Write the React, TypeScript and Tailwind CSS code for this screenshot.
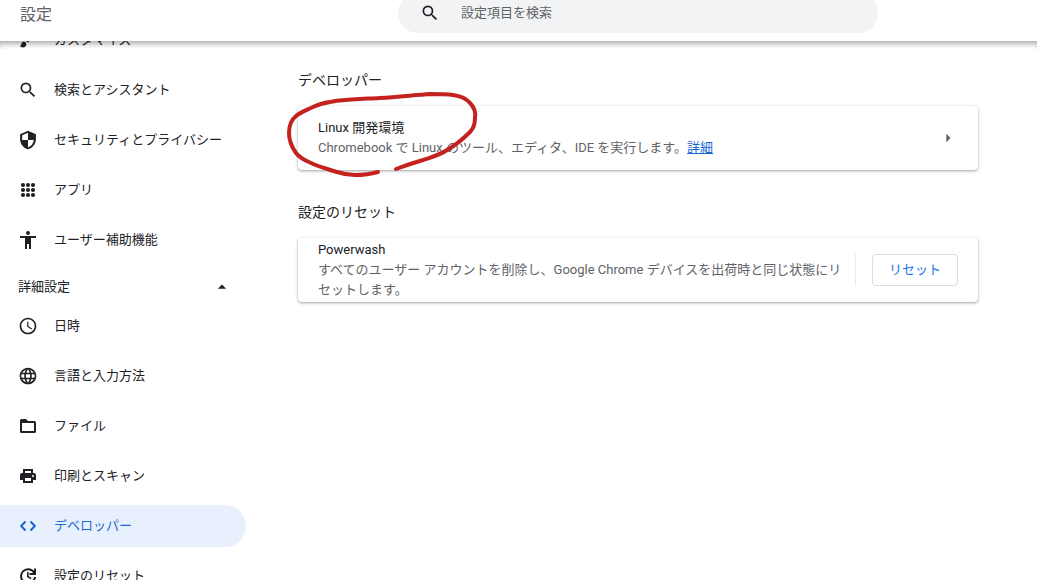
import { useState, type ReactNode } from "react";
import { MdAccessTime, MdArrowDropUp, MdArrowRight, MdLanguage, MdSearch } from "react-icons/md";

function ShieldIcon() {
  return (
    <svg viewBox="0 0 24 24" className="size-5" fill="currentColor" aria-hidden="true">
      <path fillRule="evenodd" d="M12 1L2.500 5v6c0 5.550 4 10.740 9.500 12 5.500-1.260 9.500-6.450 9.500-12V5L12 1zm0 11h7c-.53 4.120-3.280 7.790-7 8.940V12H5V6.300l7-3.110V12z" />
    </svg>
  );
}

function DotsIcon() {
  const steps = [5, 10, 15];
  return (
    <svg viewBox="0 0 20 20" className="size-5" fill="currentColor" aria-hidden="true">
      {steps.map((y) => steps.map((x) => <circle key={`${x}-${y}`} cx={x} cy={y} r="2.1" />))}
    </svg>
  );
}

function BrushIcon() {
  return (
    <svg viewBox="0 0 24 24" className="size-5" fill="currentColor" aria-hidden="true">
      <path d="M7 14c-1.66 0-3 1.34-3 3 0 1.31-1.16 2-2 2 .92 1.22 2.49 2 4 2 2.21 0 4-1.79 4-4 0-1.66-1.34-3-3-3zm13.71-9.37l-1.34-1.34a1 1 0 0 0-1.41 0L9 12.25 11.75 15l8.96-8.96a1 1 0 0 0 0-1.41z" />
    </svg>
  );
}

function PersonIcon() {
  return (
    <svg viewBox="0 0 20 20" className="size-5" fill="currentColor" aria-hidden="true">
      <circle cx="10" cy="3" r="2" />
      <path d="M2 6h16v2h-5v11h-2v-5H9v5H7V8H2z" />
    </svg>
  );
}

function FolderIcon() {
  return (
    <svg viewBox="0 0 20 20" className="size-5" fill="currentColor" aria-hidden="true">
      <path fillRule="evenodd" d="M3.6 3H8l2 2h6.4A1.6 1.6 0 0 1 18 6.6v8.8a1.6 1.6 0 0 1-1.6 1.6H3.6A1.6 1.6 0 0 1 2 15.4V4.6A1.6 1.6 0 0 1 3.6 3zM4 7v8h12V7H4z" />
    </svg>
  );
}

function PrinterIcon() {
  return (
    <svg viewBox="0 0 20 20" className="size-5" fill="currentColor" aria-hidden="true">
      <path fillRule="evenodd" d="M5 3h10v4h1a2 2 0 0 1 2 2v5h-3v3H5v-3H2V9a2 2 0 0 1 2-2h1V3zm2 2v2h6V5H7zm0 7v3h6v-3H7zm8-3a1 1 0 1 0 0 2 1 1 0 0 0 0-2z" />
    </svg>
  );
}

function CodeIcon() {
  return (
    <svg viewBox="0 0 20 20" className="size-5" fill="none" stroke="currentColor" strokeWidth="2" aria-hidden="true">
      <path d="M7.500 5.500L3.200 10l4.300 4.500M12.500 5.500l4.300 4.500-4.300 4.500" />
    </svg>
  );
}

function ResetIcon() {
  return (
    <svg viewBox="0 0 20 20" className="size-5" fill="none" stroke="currentColor" strokeWidth="2" aria-hidden="true">
      <path d="M16.200 6.800A7 7 0 1 0 17 11" />
      <path d="M17 2.500V8h-5.500" />
      <path strokeWidth="1.600" d="M9.800 6v4.500l3.400 2.200" />
    </svg>
  );
}

type Item = { label: string; icon: ReactNode; active?: boolean };

const basic: Item[] = [
  { label: "カスタマイズ", icon: <BrushIcon /> },
  { label: "検索とアシスタント", icon: <MdSearch size={20} /> },
  { label: "セキュリティとプライバシー", icon: <ShieldIcon /> },
  { label: "アプリ", icon: <DotsIcon /> },
  { label: "ユーザー補助機能", icon: <PersonIcon /> },
];

const advanced: Item[] = [
  { label: "日時", icon: <MdAccessTime size={20} /> },
  { label: "言語と入力方法", icon: <MdLanguage size={20} /> },
  { label: "ファイル", icon: <FolderIcon /> },
  { label: "印刷とスキャン", icon: <PrinterIcon /> },
  { label: "デベロッパー", icon: <CodeIcon />, active: true },
  { label: "設定のリセット", icon: <ResetIcon /> },
];

function NavList({ items }: { items: Item[] }) {
  return (
    <ul>
      {items.map((item) => (
        <li key={item.label} className="mb-2">
          <a
            href="#"
            aria-current={item.active ? "page" : undefined}
            className={`flex h-[42px] items-center gap-4 rounded-r-full pl-[18px] ${item.active ? "bg-[#e8f0fe] text-[#1967d2]" : "text-[#202124]"}`}
          >
            {item.icon}
            <span>{item.label}</span>
          </a>
        </li>
      ))}
    </ul>
  );
}

const card =
  "flex min-h-16 items-center rounded bg-white px-5 shadow-[0_1px_2px_0_rgba(60,64,67,0.3),0_1px_3px_1px_rgba(60,64,67,0.15)]";

export default function App() {
  const [open, setOpen] = useState(true);

  return (
    <div lang="ja" className="flex h-screen flex-col overflow-hidden bg-white font-[Roboto,'Noto_Sans_CJK_JP',sans-serif] text-[13px] leading-5 text-[#202124]">
      <header className="relative z-10 flex h-[41px] shrink-0 items-end bg-white pb-2">
        <h1 className="w-[246px] shrink-0 pb-1.5 pl-5 text-base leading-6 text-[#5f6368]">設定</h1>
        <div className="min-w-0 flex-1 pl-[52px]">
          <div className="flex max-w-[680px] justify-center">
            <label className="flex h-10 w-full max-w-[480px] items-center gap-[21px] rounded-full bg-[#f1f3f4] pl-[22px] pr-5">
              <MdSearch size={20} className="shrink-0" />
              <input
                type="search"
                aria-label="設定項目を検索"
                placeholder="設定項目を検索"
                className="min-w-0 flex-1 bg-transparent outline-none placeholder:text-[#5f6368]"
              />
            </label>
          </div>
        </div>
        <div className="pointer-events-none absolute inset-x-0 top-full h-2 shadow-[inset_0_5px_6px_-3px_rgba(0,0,0,0.4)]" />
      </header>

      <div className="flex min-h-0 flex-1">
        <nav aria-label="設定" className="w-[246px] shrink-0 overflow-hidden">
          <div className="-mt-[22px]">
            <NavList items={basic} />
            <button
              type="button"
              aria-expanded={open}
              onClick={() => setOpen(!open)}
              className="flex h-9 w-full items-center justify-between pl-[18px] pr-[14px]"
            >
              <span>詳細設定</span>
              <MdArrowDropUp size={20} />
            </button>
            {open && <NavList items={advanced} />}
          </div>
        </nav>

        <main className="min-w-0 flex-1 pl-[52px] pt-[29px]">
          <div className="relative max-w-[680px]">
            <section>
              <h2 className="text-sm leading-5">デベロッパー</h2>
              <div className={`mt-4 ${card}`}>
                <div className="min-w-0 flex-1">
                  <div>Linux 開発環境</div>
                  <p className="text-[#5f6368]">
                    Chromebook で Linux のツール、エディタ、IDE を実行します。
                    <a href="#" className="text-[#1967d2] underline">詳細</a>
                  </p>
                </div>
                <button type="button" aria-label="Linux 開発環境" className="text-[#5f6368]">
                  <MdArrowRight size={20} />
                </button>
              </div>
            </section>

            <section className="mt-8">
              <h2 className="text-sm leading-5">設定のリセット</h2>
              <div className={`mt-4 ${card}`}>
                <div className="min-w-0 flex-1 pr-2">
                  <div>Powerwash</div>
                  <p className="text-[#5f6368]">
                    すべてのユーザー アカウントを削除し、Google Chrome デバイスを出荷時と同じ状態にリセットします。
                  </p>
                </div>
                <div className="shrink-0 border-l border-[#e8eaed] pl-4">
                  <button type="button" className="h-8 rounded border border-[#dadce0] px-4 text-[#1a73e8]">
                    リセット
                  </button>
                </div>
              </div>
            </section>

            <svg
              viewBox="284 90 198 90"
              className="pointer-events-none absolute -left-[14px] top-5 h-[90px] w-[198px]"
              fill="none"
              stroke="#c5221f"
              strokeWidth="4"
              strokeLinecap="round"
              strokeLinejoin="round"
              aria-hidden="true"
            >
              <path d="M378 172C371 174 363 175 355 175C348 175 343 174 337 172C328 169 319 167 311 163C304 160 299 157 296 153C291 146 289 140 289 133C289 126 291 120 296 116C301 112 307 110 313 107C319 104 323 103 330 102C346 99 363 99 380 98C398 97 415 95 430 94C439 94 446 94 453 95C461 96 466 98 470 103C474 107 476 112 475 118C475 124 474 128 470 132C464 138 456 145 447 150C440 155 432 157 423 160C413 163 404 166 396 169" />
            </svg>
          </div>
        </main>
      </div>
    </div>
  );
}
